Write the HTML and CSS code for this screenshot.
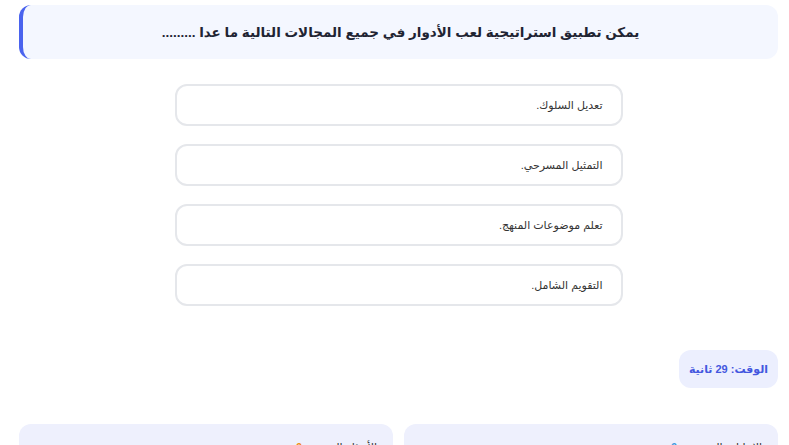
FILE: index.html
```html
<!DOCTYPE html>
<html lang="ar" dir="rtl">
<head>
<meta charset="utf-8">
<link rel="stylesheet" href="styles.css">
</head>
<body>
<div class="page">
  <div class="question">يمكن تطبيق استراتيجية لعب الأدوار في جميع المجالات التالية ما عدا .........</div>
  <div class="options">
    <div class="option">تعديل السلوك.</div>
    <div class="option">التمثيل المسرحي.</div>
    <div class="option">تعلم موضوعات المنهج.</div>
    <div class="option">التقويم الشامل.</div>
  </div>
  <div class="timer-row">
    <div class="timer"><span>الوقت: 29 ثانية</span></div>
  </div>
  <div class="stats">
    <div class="stat">الإجابات الصحيحة: <span class="blue">0</span></div>
    <div class="stat">الأسئلة المتبقية: <span class="orange">0</span></div>
  </div>
</div>
</body>
</html>
```
FILE: styles.css
```css
html, body {
  margin: 0;
  padding: 0;
  background: #ffffff;
}
body {
  font-family: "Liberation Sans", "DejaVu Sans", sans-serif;
  color: #333333;
}
.page {
  padding: 5px 11px 0 19px;
  display: flex;
  flex-direction: column;
}
.question {
  height: 54px;
  box-sizing: border-box;
  background: #f4f7ff;
  border-left: 4px solid #4a63ee;
  border-radius: 12px;
  display: flex;
  align-items: center;
  justify-content: center;
  font-size: 13.5px;
  font-weight: bold;
  color: #1f2433;
}
.options {
  margin-top: 25px;
  display: flex;
  flex-direction: column;
  align-items: center;
  gap: 18px;
}
.option {
  width: 448px;
  height: 42px;
  box-sizing: border-box;
  border: 2px solid #e5e7eb;
  border-radius: 12px;
  background: #ffffff;
  display: flex;
  align-items: center;
  padding: 0 18px;
  font-size: 11px;
  color: #333333;
}
.timer-row {
  margin-top: 44px;
  display: flex;
}
.timer {
  width: 99px;
  height: 38px;
  box-sizing: border-box;
  background: #eceffe;
  border-radius: 12px;
  display: flex;
  align-items: center;
  justify-content: center;
  font-size: 11px;
  font-weight: bold;
  color: #4357df;
}
.stats {
  margin-top: 36px;
  display: grid;
  grid-template-columns: 1fr 1fr;
  gap: 11px;
}
.stat {
  height: 60px;
  background: #eef0fd;
  border-radius: 12px;
  padding: 17px 16px;
  font-size: 11px;
  color: #333333;
}
.blue { color: #3b9be0; font-weight: bold; }
.orange { color: #f08a10; font-weight: bold; }
```
